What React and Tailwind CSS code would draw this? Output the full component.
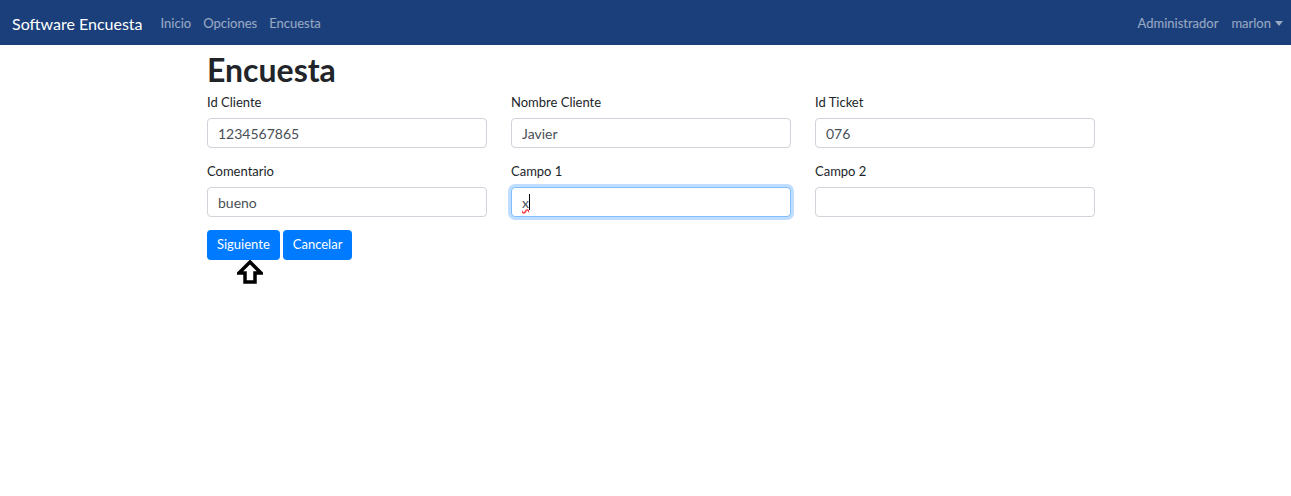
import React from 'react';

const font = { fontFamily: 'Lato, "Noto Sans", Arial, sans-serif' };

const Field = ({ label, value, focused }) => (
    <div className="flex flex-col">
        <label className="text-[13px] text-[#212529] leading-[20px] mb-[6px]">{label}</label>
        <div
            className={`h-[30px] rounded-[4px] bg-white border flex items-center px-[10px] text-[14px] text-[#495057] ${focused ? 'border-[#80bdff] shadow-[0_0_0_3px_rgba(0,123,255,0.25)]' : 'border-[#ced4da]'}`}
        >
            {focused ? (
                <span className="flex items-center">
                    <span className="underline decoration-wavy decoration-red-500">{value}</span>
                    <span className="w-px h-[16px] bg-black"></span>
                </span>
            ) : (
                <span>{value}</span>
            )}
        </div>
    </div>
);

const App = () => {
    return (
        <div className="min-h-screen bg-white" style={font}>
            {/* Navbar */}
            <nav className="h-[45px] bg-[#1b3f7b] flex items-center justify-between pl-[12px] pr-[8px]">
                <div className="flex items-center pt-[2px]">
                    <span className="text-white text-[16px] mr-[18px]">Software Encuesta</span>
                    <div className="flex items-center gap-[12px] text-[13px] text-white/55">
                        <span>Inicio</span>
                        <span>Opciones</span>
                        <span>Encuesta</span>
                    </div>
                </div>
                <div className="flex items-center gap-[13px] text-[13px] text-white/55 pt-[2px]">
                    <span>Administrador</span>
                    <span className="flex items-center">
                        marlon
                        <span className="ml-[4px] w-0 h-0 border-l-[4px] border-r-[4px] border-t-[5px] border-l-transparent border-r-transparent border-t-white/55"></span>
                    </span>
                </div>
            </nav>

            {/* Form */}
            <div className="w-[888px] ml-[207px]">
                <h1 className="text-[32px] font-bold text-[#212529] leading-[48px] mt-[1px]">Encuesta</h1>
                <div className="grid grid-cols-3 gap-x-[24px] gap-y-[13px] mt-[-2px]">
                    <Field label="Id Cliente" value="1234567865" />
                    <Field label="Nombre Cliente" value="Javier" />
                    <Field label="Id Ticket" value="076" />
                    <Field label="Comentario" value="bueno" />
                    <Field label="Campo 1" value="x" focused />
                    <Field label="Campo 2" value="" />
                </div>
                <div className="flex gap-[3px] mt-[13px]">
                    <button className="h-[30px] px-[10px] rounded-[4px] bg-[#007bff] text-white text-[13px]">Siguiente</button>
                    <button className="h-[30px] px-[10px] rounded-[4px] bg-[#007bff] text-white text-[13px]">Cancelar</button>
                </div>
                <div className="ml-[30px]">
                    <svg width="26" height="24" viewBox="0 0 26 24">
                        <path d="M13 2 L24 13 L18 13 L18 22 L8 22 L8 13 L2 13 Z" fill="white" stroke="black" strokeWidth="3.5" strokeLinejoin="miter" />
                    </svg>
                </div>
            </div>
        </div>
    );
};

export default App;
